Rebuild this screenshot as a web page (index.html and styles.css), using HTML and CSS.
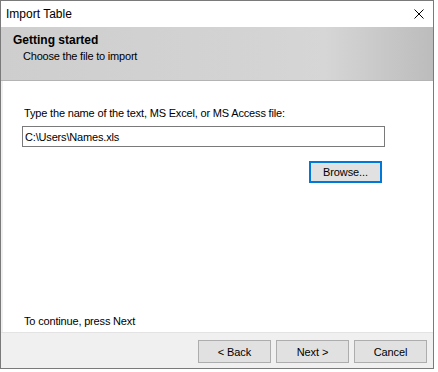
FILE: index.html
```html
<!DOCTYPE html>
<html lang="en">
<head>
    <meta charset="UTF-8">
    <title>Import Table</title>
    <link rel="stylesheet" href="styles.css">
</head>
<body>
    <div class="window">
        <div class="titlebar">
            <span class="title">Import Table</span>
            <svg class="close-icon" width="10" height="10" viewBox="0 0 10 10">
                <path d="M0.5 0.5 L9.5 9.5 M9.5 0.5 L0.5 9.5" stroke="#000" stroke-width="1" fill="none"/>
            </svg>
        </div>

        <div class="header">
            <div class="header-title">Getting started</div>
            <div class="header-sub">Choose the file to import</div>
        </div>

        <div class="content">
            <label for="fileInput">Type the name of the text, MS Excel, or MS Access file:</label>
            <input type="text" id="fileInput" class="file-input" value="C:\Users\Names.xls">
            <div class="browse-row">
                <button class="btn btn-focus">Browse...</button>
            </div>
            <div class="hint">To continue, press Next</div>
        </div>

        <div class="footer">
            <button class="btn">&lt; Back</button>
            <button class="btn">Next &gt;</button>
            <button class="btn">Cancel</button>
        </div>
    </div>
</body>
</html>
```

FILE: styles.css
```css
body {
    margin: 0;
    background-color: #fff;
    font-family: 'Liberation Sans', Arial, sans-serif;
    color: #000;
}

.window {
    width: 434px;
    height: 369px;
    box-sizing: border-box;
    border: 1px solid #7a7a7a;
    background-color: #f0f0f0;
    display: flex;
    flex-direction: column;
}

.titlebar {
    height: 26px;
    background-color: #fff;
    display: flex;
    align-items: center;
    justify-content: space-between;
    padding: 0 9px 0 5px;
    font-size: 12px;
}

.close-icon {
    display: block;
}

.header {
    height: 54px;
    box-sizing: border-box;
    padding: 6px 0 0 12px;
    background: linear-gradient(to right, #cecece 0%, #d3d3d3 55%, #d6d6d6 75%, #bcbcbc 100%);
    border-bottom: 1px solid #b4b4b4;
}

.header-title {
    font-size: 12px;
    font-weight: bold;
    line-height: 14px;
}

.header-sub {
    font-size: 11px;
    letter-spacing: -0.2px;
    margin: 3px 0 0 10px;
}

.content {
    flex: 1;
    margin-left: 2px;
    background-color: #fff;
    display: flex;
    flex-direction: column;
    padding: 26px 0 4px 21px;
    font-size: 11px;
    letter-spacing: -0.17px;
}

label {
    display: block;
    line-height: 13px;
}

.file-input {
    width: 363px;
    height: 21px;
    box-sizing: border-box;
    margin: 6px 0 0 -2px;
    padding: 0 2px;
    border: 1px solid #7a7a7a;
    font-family: 'Liberation Sans', Arial, sans-serif;
    font-size: 11px;
    letter-spacing: -0.17px;
    outline: none;
}

.browse-row {
    width: 358px;
    display: flex;
    justify-content: flex-end;
    margin-top: 14px;
}

.hint {
    margin-top: auto;
    line-height: 13px;
}

.footer {
    height: 36px;
    box-sizing: border-box;
    border-top: 1px solid #e3e3e3;
    display: flex;
    justify-content: flex-end;
    gap: 5px;
    padding: 7px 6px 0 0;
}

.btn {
    width: 73px;
    height: 23px;
    box-sizing: border-box;
    border: 1px solid #adadad;
    background-color: #e1e1e1;
    font-family: 'Liberation Sans', Arial, sans-serif;
    font-size: 11px;
    letter-spacing: -0.1px;
    color: #000;
    padding: 0;
}

.btn-focus {
    height: 22px;
    border: 2px solid #0078d7;
}
```
